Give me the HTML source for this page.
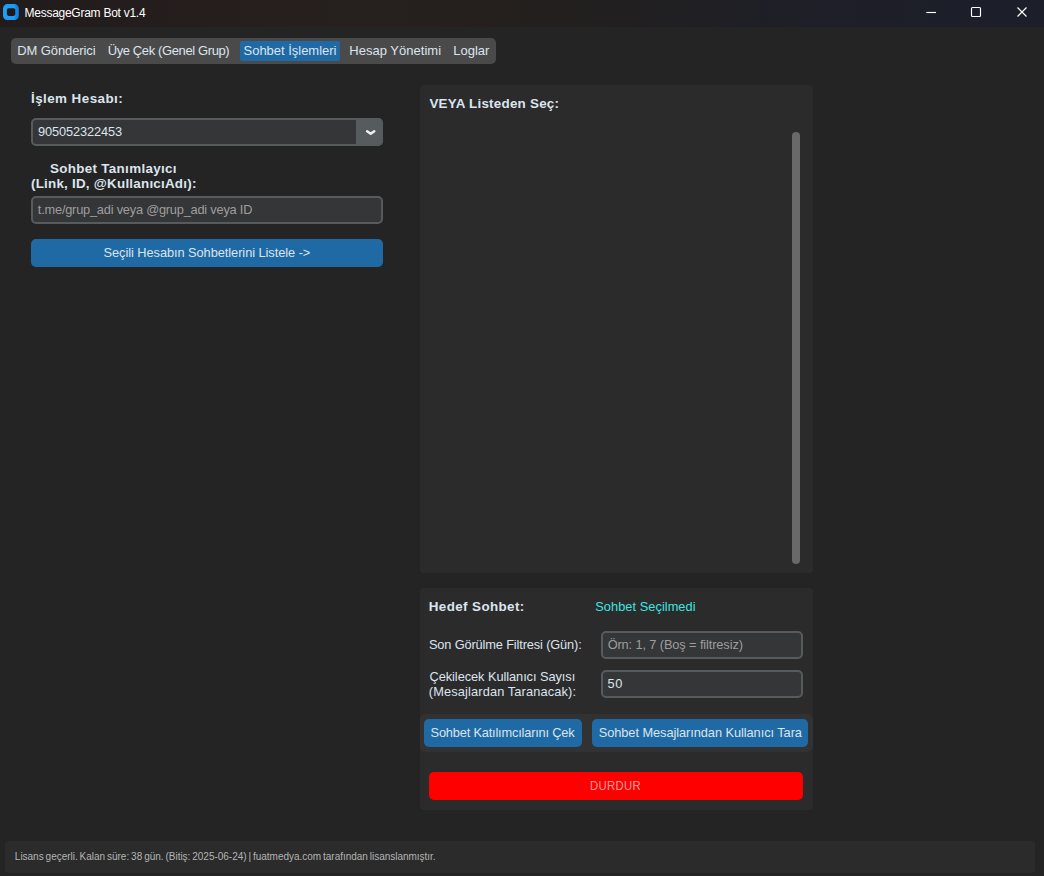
<!DOCTYPE html>
<html lang="tr">
<head>
<meta charset="utf-8">
<title>MessageGram Bot v1.4</title>
<style>
*{box-sizing:border-box;margin:0;padding:0}
html,body{width:1044px;height:876px;overflow:hidden;background:#242424}
body{position:relative;font-family:"Liberation Sans",sans-serif;color:#dce4ee;font-size:13px}
.abs{position:absolute}
.t{position:absolute;white-space:nowrap;line-height:16px}
#titlebar{left:0;top:0;width:1044px;height:27.2px;background:linear-gradient(90deg,#211b1b 0%,#231c1c 8%,#261f1e 25%,#25201d 45%,#211f20 60%,#1e1f27 75%,#1c1e2a 100%)}
#tabs{left:11px;top:38px;width:484.5px;height:26px;background:#4a4a4a;border-radius:5px}
#tabsel{left:240px;top:41px;width:100.2px;height:20px;background:#1f6aa5;border-radius:2px}
.frame{background:#2b2b2b;border-radius:4px}
.entry{background:#343638;border:2px solid #565b5e;border-radius:5px}
.btn{background:#1f6aa5;border-radius:5px}
</style>
</head>
<body>
<div id="titlebar" class="abs"></div>
<svg class="abs" style="left:2px;top:3px" width="19" height="19" viewBox="0 0 19 19"><defs><linearGradient id="ig" x1="0" y1="0" x2="1" y2="0"><stop offset="0" stop-color="#1ca0fa"/><stop offset="0.74" stop-color="#1a9af4"/><stop offset="0.82" stop-color="#1384e2"/><stop offset="1" stop-color="#1282e0"/></linearGradient></defs><rect x="1" y="1.1" width="15.8" height="15.9" rx="4.4" fill="url(#ig)"/><rect x="4.9" y="5.2" width="8.4" height="7.7" rx="1.8" fill="#1e1a1c"/></svg>
<svg class="abs" style="left:920px;top:0" width="124" height="27" viewBox="0 0 124 27" fill="none" stroke="#fff" stroke-width="1.15"><path d="M6.3 12.5h9.7"/><rect x="51.5" y="7.5" width="9" height="9" rx="1"/><path d="M97.5 7.5l9 9m0-9l-9 9"/></svg>

<div id="tabs" class="abs"></div>
<div id="tabsel" class="abs"></div>

<!-- left column -->
<div class="abs entry" style="left:31px;top:118px;width:352px;height:28px"></div>
<div class="abs" style="left:356px;top:118px;width:27px;height:28px;background:#565b5e;border-radius:0 5px 5px 0"></div>
<svg class="abs" style="left:364px;top:127px" width="14" height="10" viewBox="0 0 14 10" fill="none" stroke="#f0f0f0" stroke-width="2.4" stroke-linecap="round" stroke-linejoin="round"><path d="M3.1 4.3l3.6 2.5 3.6-2.5"/></svg>
<div class="abs entry" style="left:31px;top:196px;width:352px;height:28px"></div>
<div class="abs btn" style="left:31px;top:239px;width:352px;height:28px"></div>

<!-- right: list -->
<div class="abs frame" style="left:419.5px;top:84.5px;width:393.2px;height:488px"></div>
<div class="abs" style="left:792px;top:131.5px;width:8px;height:432.5px;background:#696969;border-radius:4px"></div>

<!-- right: target -->
<div class="abs frame" style="left:419.5px;top:588px;width:393.2px;height:221.5px"></div>
<div class="abs entry" style="left:601px;top:631.3px;width:201.7px;height:27.4px"></div>
<div class="abs entry" style="left:601px;top:670.3px;width:201.7px;height:27.4px"></div>
<div class="abs" style="left:419.5px;top:714px;width:393.2px;height:38px;background:#323232;border-radius:6px"></div>
<div class="abs btn" style="left:424px;top:719px;width:158px;height:28px"></div>
<div class="abs btn" style="left:592px;top:719px;width:216px;height:28px"></div>
<div class="abs btn" style="left:429px;top:772px;width:374px;height:28px;background:#ff0000"></div>

<!-- status -->
<div class="abs frame" style="left:5px;top:841.4px;width:1029.8px;height:31.6px;border-radius:3.5px"></div>

<div class="t" id="title" style="left:24.52px;top:4.54px;font-size:12px;letter-spacing:-0.262px;color:#ffffff">MessageGram Bot v1.4</div>
<div class="t" id="tab1" style="left:17.20px;top:42.50px;font-size:13px;letter-spacing:-0.095px">DM Gönderici</div>
<div class="t" id="tab2" style="left:107.69px;top:42.50px;font-size:13px;letter-spacing:-0.387px">Üye Çek (Genel Grup)</div>
<div class="t" id="tab3" style="left:243.53px;top:42.50px;font-size:13px;letter-spacing:-0.020px">Sohbet İşlemleri</div>
<div class="t" id="tab4" style="left:349.32px;top:42.50px;font-size:13px;letter-spacing:0.013px">Hesap Yönetimi</div>
<div class="t" id="tab5" style="left:453.33px;top:42.50px;font-size:13px;letter-spacing:-0.031px">Loglar</div>
<div class="t" id="h1" style="left:30.98px;top:90.76px;font-size:13.4px;letter-spacing:0.449px;font-weight:bold">İşlem Hesabı:</div>
<div class="t" id="combo" style="left:38.07px;top:124.46px;font-size:12.8px;letter-spacing:-0.128px">905052322453</div>
<div class="t" id="h2a" style="left:49.91px;top:160.96px;font-size:13.4px;letter-spacing:0.329px;font-weight:bold">Sohbet Tanımlayıcı</div>
<div class="t" id="h2b" style="left:30.97px;top:175.66px;font-size:13.4px;letter-spacing:0.232px;font-weight:bold">(Link, ID, @KullanıcıAdı):</div>
<div class="t" id="ph1" style="left:37.87px;top:201.56px;font-size:12.8px;letter-spacing:-0.217px;color:#9e9e9e">t.me/grup_adi veya @grup_adi veya ID</div>
<div class="t" id="btn1" style="left:103.54px;top:244.56px;font-size:12.8px;letter-spacing:-0.054px">Seçili Hesabın Sohbetlerini Listele -&gt;</div>
<div class="t" id="veya" style="left:429.40px;top:96.26px;font-size:13.4px;letter-spacing:0.239px;font-weight:bold">VEYA Listeden Seç:</div>
<div class="t" id="hedef" style="left:428.79px;top:599.06px;font-size:13.4px;letter-spacing:0.394px;font-weight:bold">Hedef Sohbet:</div>
<div class="t" id="secil" style="left:595.25px;top:598.66px;font-size:12.8px;letter-spacing:0.046px;color:#3ce6e0">Sohbet Seçilmedi</div>
<div class="t" id="songor" style="left:428.91px;top:636.96px;font-size:12.8px;letter-spacing:-0.141px">Son Görülme Filtresi (Gün):</div>
<div class="t" id="ph2" style="left:607.64px;top:636.76px;font-size:12.8px;letter-spacing:-0.116px;color:#9e9e9e">Örn: 1, 7 (Boş = filtresiz)</div>
<div class="t" id="cek1" style="left:429.51px;top:669.46px;font-size:12.8px;letter-spacing:-0.061px">Çekilecek Kullanıcı Sayısı</div>
<div class="t" id="cek2" style="left:428.87px;top:684.36px;font-size:12.8px;letter-spacing:0.130px">(Mesajlardan Taranacak):</div>
<div class="t" id="v50" style="left:607.62px;top:675.76px;font-size:12.8px;letter-spacing:0.630px">50</div>
<div class="t" id="b2" style="left:430.54px;top:725.36px;font-size:12.8px;letter-spacing:-0.179px">Sohbet Katılımcılarını Çek</div>
<div class="t" id="b3" style="left:598.74px;top:725.36px;font-size:12.8px;letter-spacing:-0.063px">Sohbet Mesajlarından Kullanıcı Tara</div>
<div class="t" id="durdur" style="left:590.28px;top:777.63px;font-size:12.6px;letter-spacing:0.323px;transform:scaleX(0.9);transform-origin:0 0;color:#e6a0a0">DURDUR</div>
<div class="t" id="status" style="left:14.87px;top:848.83px;font-size:10px;letter-spacing:-0.022px;word-spacing:-0.8px;color:#b4b4b4">Lisans geçerli. Kalan süre: 38 gün. (Bitiş: 2025-06-24) | fuatmedya.com tarafından lisanslanmıştır.</div>
</body>
</html>
